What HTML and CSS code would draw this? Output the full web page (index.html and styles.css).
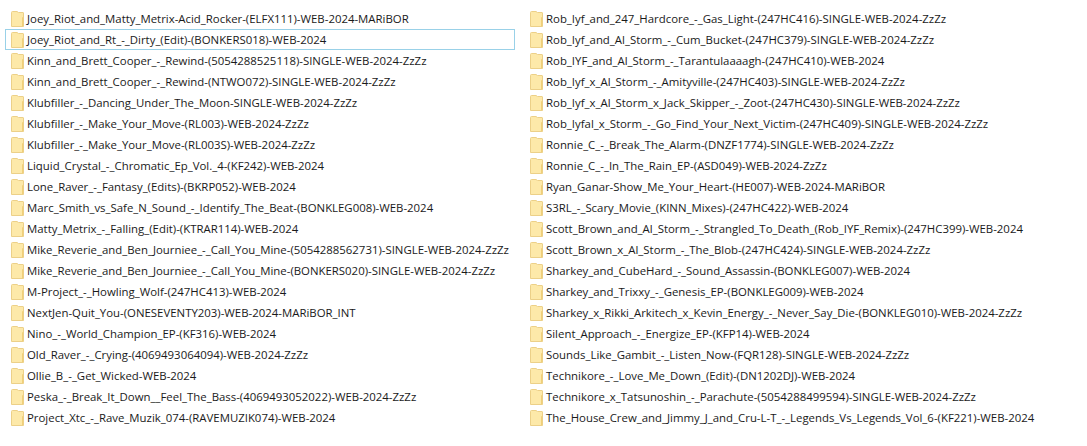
FILE: index.html
```html
<!DOCTYPE html>
<html lang="en">

<head>
    <meta charset="UTF-8">
    <meta name="viewport" content="width=device-width, initial-scale=1.0">
    <title>Folders</title>
    <link rel="stylesheet" href="styles.css">
</head>

<body>
    <svg class="defs" width="0" height="0">
        <symbol id="folder" viewBox="0 0 13 16">
            <path d="M.5 1.500Q.5.5 1.500.5H6L7.500 1.500H12Q12.500 1.500 12.500 2V15.500H.5Z" fill="#fde9a9" stroke="#ecd088"/>
            <path d="M11 15V6.500L12 6V15Z" fill="#f0cf78"/>
        </symbol>
    </svg>
    <ul class="list">
        <li class="row"><svg class="icon"><use href="#folder"/></svg><span>Joey_Riot_and_Matty_Metrix-Acid_Rocker-(ELFX111)-WEB-2024-MARiBOR</span></li>
        <li class="row selected"><svg class="icon"><use href="#folder"/></svg><span>Joey_Riot_and_Rt_-_Dirty_(Edit)-(BONKERS018)-WEB-2024</span></li>
        <li class="row"><svg class="icon"><use href="#folder"/></svg><span>Kinn_and_Brett_Cooper_-_Rewind-(5054288525118)-SINGLE-WEB-2024-ZzZz</span></li>
        <li class="row"><svg class="icon"><use href="#folder"/></svg><span>Kinn_and_Brett_Cooper_-_Rewind-(NTWO072)-SINGLE-WEB-2024-ZzZz</span></li>
        <li class="row"><svg class="icon"><use href="#folder"/></svg><span>Klubfiller_-_Dancing_Under_The_Moon-SINGLE-WEB-2024-ZzZz</span></li>
        <li class="row"><svg class="icon"><use href="#folder"/></svg><span>Klubfiller_-_Make_Your_Move-(RL003)-WEB-2024-ZzZz</span></li>
        <li class="row"><svg class="icon"><use href="#folder"/></svg><span>Klubfiller_-_Make_Your_Move-(RL003S)-WEB-2024-ZzZz</span></li>
        <li class="row"><svg class="icon"><use href="#folder"/></svg><span>Liquid_Crystal_-_Chromatic_Ep_Vol._4-(KF242)-WEB-2024</span></li>
        <li class="row"><svg class="icon"><use href="#folder"/></svg><span>Lone_Raver_-_Fantasy_(Edits)-(BKRP052)-WEB-2024</span></li>
        <li class="row"><svg class="icon"><use href="#folder"/></svg><span>Marc_Smith_vs_Safe_N_Sound_-_Identify_The_Beat-(BONKLEG008)-WEB-2024</span></li>
        <li class="row"><svg class="icon"><use href="#folder"/></svg><span>Matty_Metrix_-_Falling_(Edit)-(KTRAR114)-WEB-2024</span></li>
        <li class="row"><svg class="icon"><use href="#folder"/></svg><span>Mike_Reverie_and_Ben_Journiee_-_Call_You_Mine-(5054288562731)-SINGLE-WEB-2024-ZzZz</span></li>
        <li class="row"><svg class="icon"><use href="#folder"/></svg><span>Mike_Reverie_and_Ben_Journiee_-_Call_You_Mine-(BONKERS020)-SINGLE-WEB-2024-ZzZz</span></li>
        <li class="row"><svg class="icon"><use href="#folder"/></svg><span>M-Project_-_Howling_Wolf-(247HC413)-WEB-2024</span></li>
        <li class="row"><svg class="icon"><use href="#folder"/></svg><span>NextJen-Quit_You-(ONESEVENTY203)-WEB-2024-MARiBOR_INT</span></li>
        <li class="row"><svg class="icon"><use href="#folder"/></svg><span>Nino_-_World_Champion_EP-(KF316)-WEB-2024</span></li>
        <li class="row"><svg class="icon"><use href="#folder"/></svg><span>Old_Raver_-_Crying-(4069493064094)-WEB-2024-ZzZz</span></li>
        <li class="row"><svg class="icon"><use href="#folder"/></svg><span>Ollie_B_-_Get_Wicked-WEB-2024</span></li>
        <li class="row"><svg class="icon"><use href="#folder"/></svg><span>Peska_-_Break_It_Down__Feel_The_Bass-(4069493052022)-WEB-2024-ZzZz</span></li>
        <li class="row"><svg class="icon"><use href="#folder"/></svg><span>Project_Xtc_-_Rave_Muzik_074-(RAVEMUZIK074)-WEB-2024</span></li>

        <li class="row"><svg class="icon"><use href="#folder"/></svg><span>Rob_Iyf_and_247_Hardcore_-_Gas_Light-(247HC416)-SINGLE-WEB-2024-ZzZz</span></li>
        <li class="row"><svg class="icon"><use href="#folder"/></svg><span>Rob_Iyf_and_Al_Storm_-_Cum_Bucket-(247HC379)-SINGLE-WEB-2024-ZzZz</span></li>
        <li class="row"><svg class="icon"><use href="#folder"/></svg><span>Rob_IYF_and_Al_Storm_-_Tarantulaaaagh-(247HC410)-WEB-2024</span></li>
        <li class="row"><svg class="icon"><use href="#folder"/></svg><span>Rob_Iyf_x_Al_Storm_-_Amityville-(247HC403)-SINGLE-WEB-2024-ZzZz</span></li>
        <li class="row"><svg class="icon"><use href="#folder"/></svg><span>Rob_Iyf_x_Al_Storm_x_Jack_Skipper_-_Zoot-(247HC430)-SINGLE-WEB-2024-ZzZz</span></li>
        <li class="row"><svg class="icon"><use href="#folder"/></svg><span>Rob_Iyfal_x_Storm_-_Go_Find_Your_Next_Victim-(247HC409)-SINGLE-WEB-2024-ZzZz</span></li>
        <li class="row"><svg class="icon"><use href="#folder"/></svg><span>Ronnie_C_-_Break_The_Alarm-(DNZF1774)-SINGLE-WEB-2024-ZzZz</span></li>
        <li class="row"><svg class="icon"><use href="#folder"/></svg><span>Ronnie_C_-_In_The_Rain_EP-(ASD049)-WEB-2024-ZzZz</span></li>
        <li class="row"><svg class="icon"><use href="#folder"/></svg><span>Ryan_Ganar-Show_Me_Your_Heart-(HE007)-WEB-2024-MARiBOR</span></li>
        <li class="row"><svg class="icon"><use href="#folder"/></svg><span>S3RL_-_Scary_Movie_(KINN_Mixes)-(247HC422)-WEB-2024</span></li>
        <li class="row"><svg class="icon"><use href="#folder"/></svg><span>Scott_Brown_and_Al_Storm_-_Strangled_To_Death_(Rob_IYF_Remix)-(247HC399)-WEB-2024</span></li>
        <li class="row"><svg class="icon"><use href="#folder"/></svg><span>Scott_Brown_x_Al_Storm_-_The_Blob-(247HC424)-SINGLE-WEB-2024-ZzZz</span></li>
        <li class="row"><svg class="icon"><use href="#folder"/></svg><span>Sharkey_and_CubeHard_-_Sound_Assassin-(BONKLEG007)-WEB-2024</span></li>
        <li class="row"><svg class="icon"><use href="#folder"/></svg><span>Sharkey_and_Trixxy_-_Genesis_EP-(BONKLEG009)-WEB-2024</span></li>
        <li class="row"><svg class="icon"><use href="#folder"/></svg><span>Sharkey_x_Rikki_Arkitech_x_Kevin_Energy_-_Never_Say_Die-(BONKLEG010)-WEB-2024-ZzZz</span></li>
        <li class="row"><svg class="icon"><use href="#folder"/></svg><span>Silent_Approach_-_Energize_EP-(KFP14)-WEB-2024</span></li>
        <li class="row"><svg class="icon"><use href="#folder"/></svg><span>Sounds_Like_Gambit_-_Listen_Now-(FQR128)-SINGLE-WEB-2024-ZzZz</span></li>
        <li class="row"><svg class="icon"><use href="#folder"/></svg><span>Technikore_-_Love_Me_Down_(Edit)-(DN1202DJ)-WEB-2024</span></li>
        <li class="row"><svg class="icon"><use href="#folder"/></svg><span>Technikore_x_Tatsunoshin_-_Parachute-(5054288499594)-SINGLE-WEB-2024-ZzZz</span></li>
        <li class="row"><svg class="icon"><use href="#folder"/></svg><span>The_House_Crew_and_Jimmy_J_and_Cru-L-T_-_Legends_Vs_Legends_Vol_6-(KF221)-WEB-2024</span></li>
    </ul>
</body>

</html>
```

FILE: styles.css
```css
* {
    margin: 0;
    padding: 0;
    box-sizing: border-box;
}

body {
    width: 1087px;
    height: 446px;
    overflow: hidden;
    background-color: white;
    color: #1a1a1a;
    font-family: "Open Sans", "Liberation Sans", sans-serif;
    font-size: 11.4px;
}

.defs {
    display: block;
}

.list {
    display: grid;
    grid-template-columns: 510px 510px;
    grid-template-rows: repeat(20, 21px);
    grid-auto-flow: column;
    column-gap: 9px;
    padding: 8px 0 0 5px;
    list-style: none;
}

.row {
    display: flex;
    align-items: center;
    gap: 3px;
    height: 21px;
    padding-left: 5px;
    border: 1px solid transparent;
    white-space: nowrap;
}

.selected {
    border-color: #99d1e8;
}

.icon {
    flex: none;
    width: 13px;
    height: 16px;
}
```
